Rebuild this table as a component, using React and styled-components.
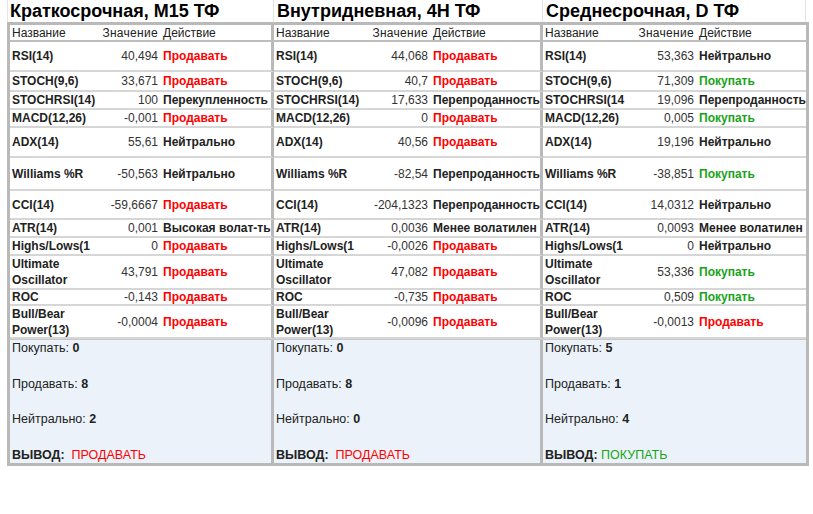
import React from 'react';
import styled, { createGlobalStyle } from 'styled-components';

const COLS = '90px 60px 114px 95px 61px 113px 93px 60px 110px';
const RED = '#ff0000';
const GREEN = '#19a319';
const EDGE = '#b9b9b9';

const panels = [
  {
    title: 'Краткосрочная, M15 ТФ',
    buy: 0,
    sell: 8,
    neutral: 2,
    verdict: 'ПРОДАВАТЬ',
    wide: true,
  },
  {
    title: 'Внутридневная, 4H ТФ',
    buy: 0,
    sell: 8,
    neutral: 0,
    verdict: 'ПРОДАВАТЬ',
    wide: true,
  },
  {
    title: 'Среднесрочная, D ТФ',
    buy: 5,
    sell: 1,
    neutral: 4,
    verdict: 'ПОКУПАТЬ',
  },
];

// s = продавать, b = покупать, n = прочее
const rows = [
  { h: 30, name: ['RSI(14)', 'RSI(14)', 'RSI(14)'], cells: [['40,494', 'Продавать', 's'], ['44,068', 'Продавать', 's'], ['53,363', 'Нейтрально', 'n']] },
  { h: 20, name: ['STOCH(9,6)', 'STOCH(9,6)', 'STOCH(9,6)'], cells: [['33,671', 'Продавать', 's'], ['40,7', 'Продавать', 's'], ['71,309', 'Покупать', 'b']] },
  { h: 18, name: ['STOCHRSI(14)', 'STOCHRSI(14)', 'STOCHRSI(14'], cells: [['100', 'Перекупленность', 'n'], ['17,633', 'Перепроданность', 'n'], ['19,096', 'Перепроданность', 'n']] },
  { h: 18, name: ['MACD(12,26)', 'MACD(12,26)', 'MACD(12,26)'], cells: [['-0,001', 'Продавать', 's'], ['0', 'Продавать', 's'], ['0,005', 'Покупать', 'b']] },
  { h: 30, name: ['ADX(14)', 'ADX(14)', 'ADX(14)'], cells: [['55,61', 'Нейтрально', 'n'], ['40,56', 'Продавать', 's'], ['19,196', 'Нейтрально', 'n']] },
  { h: 33, name: ['Williams %R', 'Williams %R', 'Williams %R'], cells: [['-50,563', 'Нейтрально', 'n'], ['-82,54', 'Перепроданность', 'n'], ['-38,851', 'Покупать', 'b']] },
  { h: 29, name: ['CCI(14)', 'CCI(14)', 'CCI(14)'], cells: [['-59,6667', 'Продавать', 's'], ['-204,1323', 'Перепроданность', 'n'], ['14,0312', 'Нейтрально', 'n']] },
  { h: 18, name: ['ATR(14)', 'ATR(14)', 'ATR(14)'], cells: [['0,001', 'Высокая волат-ть', 'n'], ['0,0036', 'Менее волатилен', 'n'], ['0,0093', 'Менее волатилен', 'n']] },
  { h: 18, name: ['Highs/Lows(1', 'Highs/Lows(1', 'Highs/Lows(1'], cells: [['0', 'Продавать', 's'], ['-0,0026', 'Продавать', 's'], ['0', 'Нейтрально', 'n']] },
  { h: 34, name: ['Ultimate Oscillator', 'Ultimate Oscillator', 'Ultimate Oscillator'], cells: [['43,791', 'Продавать', 's'], ['47,082', 'Продавать', 's'], ['53,336', 'Покупать', 'b']] },
  { h: 16, name: ['ROC', 'ROC', 'ROC'], cells: [['-0,143', 'Продавать', 's'], ['-0,735', 'Продавать', 's'], ['0,509', 'Покупать', 'b']] },
  { h: 33, name: ['Bull/Bear Power(13)', 'Bull/Bear Power(13)', 'Bull/Bear Power(13)'], cells: [['-0,0004', 'Продавать', 's'], ['-0,0096', 'Продавать', 's'], ['-0,0013', 'Продавать', 's']] },
];

const toneColor = (t) => (t === 's' ? RED : t === 'b' ? GREEN : '#222');

const App = () => {
  return (
    <Page>
      <GlobalStyle />
      <TitleRow>
        {panels.map((p, i) => (
          <Title key={p.title} $first={i === 0}>
            {p.title}
          </Title>
        ))}
      </TitleRow>
      <Sheet>
        <Row $h={17} $head>
          {panels.map((p, i) => (
            <React.Fragment key={p.title}>
              <NameCell $head>Название</NameCell>
              <ValueCell $head>Значение</ValueCell>
              <ActionCell $head $sep={i < 2}>
                Действие
              </ActionCell>
            </React.Fragment>
          ))}
        </Row>
        {rows.map((r) => (
          <Row key={r.name[0]} $h={r.h}>
            {r.cells.map(([value, action, tone], i) => (
              <React.Fragment key={i}>
                <NameCell>{r.name[i]}</NameCell>
                <ValueCell>{value}</ValueCell>
                <ActionCell $tone={tone} $sep={i < 2}>
                  {action}
                </ActionCell>
              </React.Fragment>
            ))}
          </Row>
        ))}
        <Summary>
          {panels.map((p, i) => (
            <SummaryCell key={p.title} $sep={i < 2}>
              <Line>
                Покупать: <b>{p.buy}</b>
              </Line>
              <Line>
                Продавать: <b>{p.sell}</b>
              </Line>
              <Line>
                Нейтрально: <b>{p.neutral}</b>
              </Line>
              <Line>
                <b>ВЫВОД:</b>
                {p.wide ? '\u00a0 ' : ' '}
                <Verdict $buy={p.verdict === 'ПОКУПАТЬ'}>{p.verdict}</Verdict>
              </Line>
            </SummaryCell>
          ))}
        </Summary>
      </Sheet>
    </Page>
  );
};

export default App;

const GlobalStyle = createGlobalStyle`
  html, body {
    margin: 0;
    background: #fff;
  }
  body {
    font-family: "Liberation Sans", Arial, sans-serif;
    color: #222;
  }
`;

const Page = styled.div`
  width: 813px;
  height: 514px;
  padding-left: 7px;
  box-sizing: border-box;
  background: #fff;
`;

const TitleRow = styled.div`
  display: grid;
  grid-template-columns: ${COLS};
  width: 802px;
  height: 22px;
  padding-left: 3px;
  box-sizing: border-box;
  box-shadow: inset 1px 0 0 #e4e4e4;
`;

const Title = styled.div`
  grid-column: span 3;
  padding-left: ${(p) => (p.$first ? 0 : 3)}px;
  font-size: 18px;
  font-weight: 700;
  line-height: 23px;
  color: #000;
  white-space: nowrap;
  overflow: hidden;
  box-shadow: inset -1px 0 0 #e4e4e4;
`;

const Sheet = styled.div`
  width: 802px;
  box-sizing: border-box;
  border: 3px solid ${EDGE};
`;

const Row = styled.div`
  --line: ${(p) => (p.$head ? '#bebebe' : '#d6d6d6')};
  display: grid;
  grid-template-columns: ${COLS};
  grid-template-rows: ${(p) => p.$h}px;
  height: ${(p) => p.$h}px;
`;

const Cell = styled.div`
  display: flex;
  align-items: center;
  min-height: 0;
  box-sizing: border-box;
  border-bottom: 2px solid var(--line);
  font-size: 12px;
  line-height: 16px;
  overflow-x: clip;
  overflow-y: visible;
  background: #fff;
`;

const NameCell = styled(Cell)`
  padding-left: 2px;
  font-weight: ${(p) => (p.$head ? 400 : 700)};
  color: #222;
`;

const ValueCell = styled(Cell)`
  justify-content: flex-end;
  padding-right: 2px;
  white-space: nowrap;
  color: ${(p) => (p.$head ? '#222' : '#333')};
  letter-spacing: ${(p) => (p.$head ? '0.3px' : '0')};
`;

const ActionCell = styled(Cell)`
  padding-left: 3px;
  white-space: nowrap;
  font-weight: ${(p) => (p.$head ? 400 : 700)};
  color: ${(p) => (p.$head ? '#222' : toneColor(p.$tone))};
  border-right: ${(p) => (p.$sep ? `3px solid ${EDGE}` : 'none')};
`;

const Summary = styled.div`
  display: grid;
  grid-template-columns: ${COLS};
  height: 124px;
  border-top: 1px solid #c8c8c8;
  box-sizing: border-box;
`;

const SummaryCell = styled.div`
  grid-column: span 3;
  display: flex;
  flex-direction: column;
  justify-content: space-between;
  padding: 0 0 0 2px;
  background: #ebf2f9;
  border-right: ${(p) => (p.$sep ? `3px solid ${EDGE}` : 'none')};
  font-size: 12.5px;
  line-height: 16px;
  color: #222;
`;

const Line = styled.div`
  white-space: pre;

  b {
    font-weight: 700;
  }
`;

const Verdict = styled.span`
  color: ${(p) => (p.$buy ? GREEN : RED)};
`;
